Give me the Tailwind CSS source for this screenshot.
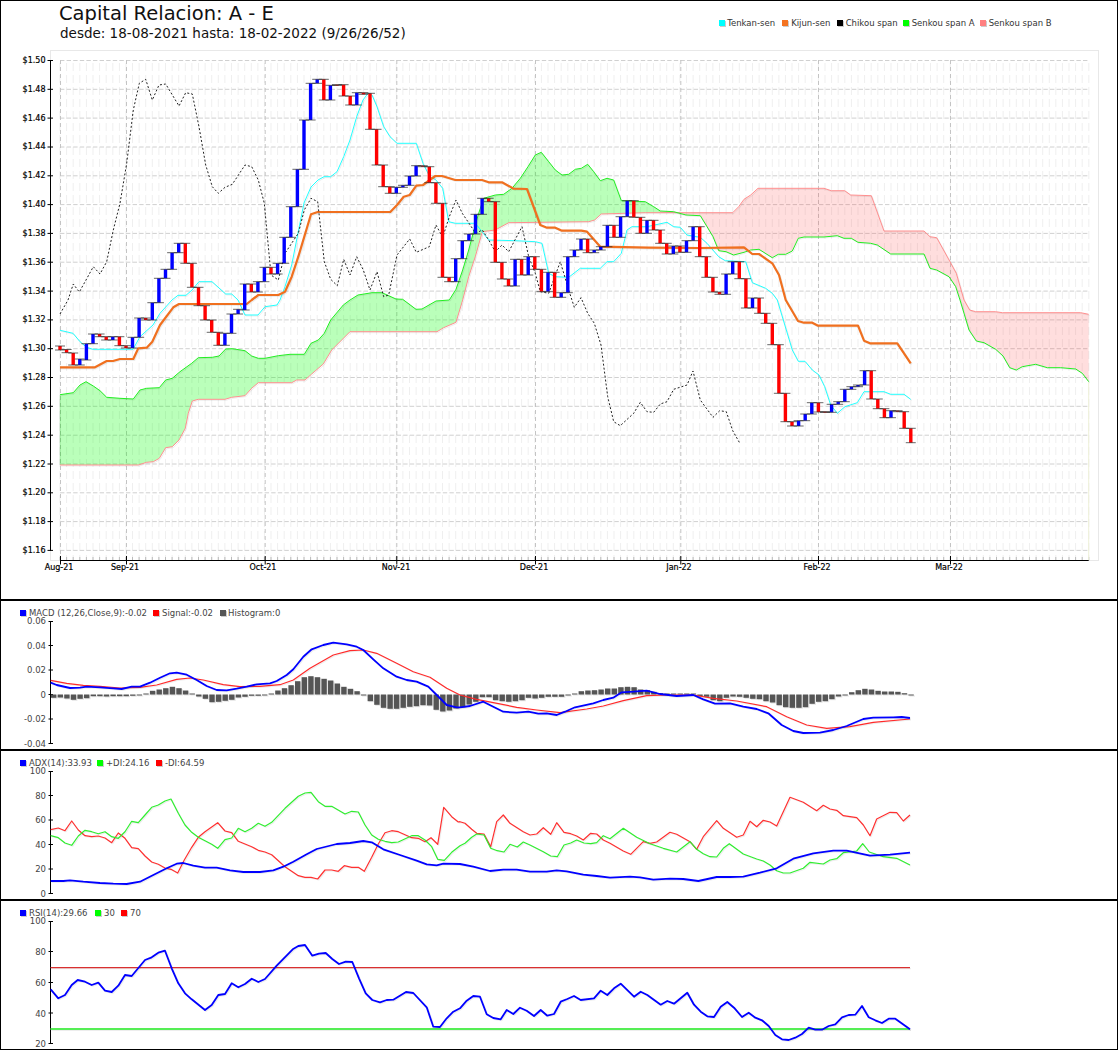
<!DOCTYPE html>
<html lang="es">
<head>
<meta charset="UTF-8" />
<title>Capital Relacion: A - E</title>
<script src="https://cdn.jsdelivr.net/npm/@tailwindcss/browser@4"></script>
</head>
<body class="bg-white font-['DejaVu_Sans',sans-serif] text-[#333]">
<div class="w-[1118px] h-[1050px] flex flex-col">

  <!-- grafico principal: ichimoku -->
  <section class="box-border h-[600px] border border-black flex flex-col">
    <header class="h-[49px] flex items-start">
      <div class="pl-[58px] pt-[1px] text-[#111]">
        <h1 class="text-[19.5px] leading-[24px]">Capital Relacion: A - E</h1>
        <p class="text-[13.5px] leading-[14px] pl-px whitespace-nowrap">desde: 18-08-2021 hasta: 18-02-2022 (9/26/26/52)</p>
      </div>
      <ul class="ml-[313px] mt-[16px] flex text-[8.5px] leading-[12px]">
        <li class="flex items-center w-[63.5px]"><span class="w-[6px] h-[6px] mr-[2.5px] bg-[#00ffff] shadow-[1px_1px_0_#ccc]"></span>Tenkan-sen</li>
        <li class="flex items-center w-[54.5px]"><span class="w-[6px] h-[6px] mr-[3px] bg-[#f47321] shadow-[1px_1px_0_#ccc]"></span>Kijun-sen</li>
        <li class="flex items-center w-[66px]"><span class="w-[6px] h-[6px] mr-[3px] bg-black shadow-[1px_1px_0_#ccc]"></span>Chikou span</li>
        <li class="flex items-center w-[77px]"><span class="w-[6px] h-[6px] mr-[3px] bg-[#00ff00] shadow-[1px_1px_0_#ccc]"></span>Senkou span A</li>
        <li class="flex items-center"><span class="w-[6px] h-[6px] mr-[3px] bg-[#ff8080] shadow-[1px_1px_0_#ccc]"></span>Senkou span B</li>
      </ul>
    </header>
    <svg id="main" width="1116" height="549" viewBox="1 50 1116 549">
      <defs>
        <clipPath id="cloud-a"><rect x="50" y="50" width="610" height="520" /></clipPath>
        <clipPath id="cloud-b"><rect x="660" y="50" width="440" height="520" /></clipPath>
      </defs>
      <rect x="50.5" y="50.5" width="1048" height="510" fill="none" stroke="#e8e8e8" />
      <g id="main-grid"></g>
      <g id="main-plot"></g>
      <g font-size="8" fill="#000" text-anchor="end" stroke="#000" stroke-width="0.2">
        <text x="45.5" y="63">$1.50</text>
        <text x="45.5" y="92">$1.48</text>
        <text x="45.5" y="121">$1.46</text>
        <text x="45.5" y="149">$1.44</text>
        <text x="45.5" y="178">$1.42</text>
        <text x="45.5" y="207">$1.40</text>
        <text x="45.5" y="236">$1.38</text>
        <text x="45.5" y="265">$1.36</text>
        <text x="45.5" y="294">$1.34</text>
        <text x="45.5" y="322">$1.32</text>
        <text x="45.5" y="351">$1.30</text>
        <text x="45.5" y="380">$1.28</text>
        <text x="45.5" y="409">$1.26</text>
        <text x="45.5" y="438">$1.24</text>
        <text x="45.5" y="467">$1.22</text>
        <text x="45.5" y="495">$1.20</text>
        <text x="45.5" y="524">$1.18</text>
        <text x="45.5" y="553">$1.16</text>
      </g>
      <g font-size="8" fill="#000" text-anchor="middle" stroke="#000" stroke-width="0.2">
        <text x="59" y="570">Aug-21</text>
        <text x="125" y="570">Sep-21</text>
        <text x="263" y="570">Oct-21</text>
        <text x="396" y="570">Nov-21</text>
        <text x="534" y="570">Dec-21</text>
        <text x="679" y="570">Jan-22</text>
        <text x="817" y="570">Feb-22</text>
        <text x="949" y="570">Mar-22</text>
      </g>
    </svg>
  </section>

  <!-- MACD -->
  <section class="box-border h-[150px] border border-black flex flex-col">
    <ul class="h-[18px] pl-[19px] pt-[6px] flex text-[8.5px] leading-[10px] text-[#444]">
      <li class="flex items-center w-[133px]"><span class="w-[6px] h-[6px] mr-[3px] bg-[#0000ff] shadow-[1px_1px_0_#ccc]"></span>MACD (12,26,Close,9):-0.02</li>
      <li class="flex items-center w-[67px]"><span class="w-[6px] h-[6px] mr-[3px] bg-[#ff0000] shadow-[1px_1px_0_#ccc]"></span>Signal:-0.02</li>
      <li class="flex items-center"><span class="w-[6px] h-[6px] mr-[2px] bg-[#555] shadow-[1px_1px_0_#ccc]"></span>Histogram:0</li>
    </ul>
    <svg id="macd" class="overflow-visible" width="1116" height="130" viewBox="1 619 1116 130">
      <g font-size="8.5" fill="#444" text-anchor="end">
        <text x="46" y="623.5">0.06</text>
        <text x="46" y="648.5">0.04</text>
        <text x="46" y="673">0.02</text>
        <text x="46" y="697.5">0</text>
        <text x="46" y="722">-0.02</text>
        <text x="46" y="746.5">-0.04</text>
      </g>
    </svg>
  </section>

  <!-- ADX -->
  <section class="box-border h-[150px] border border-black flex flex-col">
    <ul class="h-[18px] pl-[19px] pt-[6px] flex text-[8.5px] leading-[10px] text-[#444]">
      <li class="flex items-center w-[77px]"><span class="w-[6px] h-[6px] mr-[3px] bg-[#0000ff] shadow-[1px_1px_0_#ccc]"></span>ADX(14):33.93</li>
      <li class="flex items-center w-[59px]"><span class="w-[6px] h-[6px] mr-[3px] bg-[#00ff00] shadow-[1px_1px_0_#ccc]"></span>+DI:24.16</li>
      <li class="flex items-center"><span class="w-[6px] h-[6px] mr-[3px] bg-[#ff0000] shadow-[1px_1px_0_#ccc]"></span>-DI:64.59</li>
    </ul>
    <svg id="adx" class="overflow-visible" width="1116" height="130" viewBox="1 769 1116 130">
      <g font-size="8.5" fill="#444" text-anchor="end">
        <text x="46" y="773.5">100</text>
        <text x="46" y="798.5">80</text>
        <text x="46" y="823">60</text>
        <text x="46" y="847.5">40</text>
        <text x="46" y="872">20</text>
        <text x="46" y="896.5">0</text>
      </g>
    </svg>
  </section>

  <!-- RSI -->
  <section class="box-border h-[150px] border border-black flex flex-col">
    <ul class="h-[18px] pl-[19px] pt-[6px] flex text-[8.5px] leading-[10px] text-[#444]">
      <li class="flex items-center w-[75px]"><span class="w-[6px] h-[6px] mr-[3px] bg-[#0000ff] shadow-[1px_1px_0_#ccc]"></span>RSI(14):29.66</li>
      <li class="flex items-center w-[26px]"><span class="w-[6px] h-[6px] mr-[3px] bg-[#00ff00] shadow-[1px_1px_0_#ccc]"></span>30</li>
      <li class="flex items-center"><span class="w-[6px] h-[6px] mr-[3px] bg-[#ff0000] shadow-[1px_1px_0_#ccc]"></span>70</li>
    </ul>
    <svg id="rsi" class="overflow-visible" width="1116" height="130" viewBox="1 919 1116 130">
      <g font-size="8.5" fill="#444" text-anchor="end">
        <text x="46" y="923.5">100</text>
        <text x="46" y="955">80</text>
        <text x="46" y="985.5">60</text>
        <text x="46" y="1016.5">40</text>
        <text x="46" y="1046.5">20</text>
      </g>
    </svg>
  </section>
</div>

<script>
// separacion entre barras y posicion de cada indice
var STEP = 6.595;
function xAt(i) { return 60 + i * STEP; }

// puntos leidos a escala 3x: x0 + z/3, y0 + z/3
function scaled(pts, x0, y0) {
  var out = [];
  for (var i = 0; i < pts.length; i += 2) out.push(x0 + pts[i] / 3, y0 + pts[i + 1] / 3);
  return out;
}
function join(a, b, bx, y0) { return scaled(a, 0, y0).concat(scaled(b, bx, y0)); }

function pointsAttr(p) {
  var s = [];
  for (var i = 0; i < p.length; i += 2) s.push(p[i].toFixed(1) + ',' + p[i + 1].toFixed(1));
  return s.join(' ');
}
function line(p, color, w, dash) {
  var a = 'points="' + pointsAttr(p) + '" fill="none" stroke-linejoin="round" stroke-width="' + w + '"' +
    (dash ? ' stroke-dasharray="' + dash + '"' : '');
  var shadow = dash ? '' : '<polyline ' + a + ' stroke="rgba(0,0,0,0.07)" transform="translate(1,1)" />';
  return shadow + '<polyline ' + a + ' stroke="' + color + '" />';
}
function seg(x1, y1, x2, y2, color, dash, w) {
  return '<line x1="' + x1 + '" y1="' + y1 + '" x2="' + x2 + '" y2="' + y2 + '" stroke="' + color + '" stroke-width="' + (w || 1) + '"' +
    (dash ? ' stroke-dasharray="' + dash + '"' : '') + ' />';
}
function rect(x, y, w, h, color) {
  return '<rect x="' + x.toFixed(1) + '" y="' + y.toFixed(1) + '" width="' + w + '" height="' + h.toFixed(1) + '" fill="' + color + '" />';
}

/* ---------- ichimoku ---------- */
var tenkan = [60,330.3,73,333.3,80,341.7,86.7,347.3,93,349.3,133,349.3,140,336.7,153,325,160,313.3,172,300,178,295.3,186,295.3,192,290,199,281.7,212,281.7,225.7,294,231.7,294,238,300,245,315,258,315,265,306.7,277,305,280,300,285,286.7,291.7,265,298,233,304,203,311,187,318,180,324,176.7,330.7,176.7,337,171.7,343.7,156.7,350,140,356.7,116.7,363,100,368,93.3,372,95,377,106.7,383.7,126.7,390,136.7,397,143.3,416.3,143.3,423,163.3,429.7,176.7,435.3,179.3,442.7,188.3,448.7,221.7,455.3,223.3,475.3,223.3,482,231.7,488.7,240,515.3,240.7,535.3,241.7,542,243.3,548.7,273.3,555.3,276.7,568.7,277.3,580.3,268.3,600.3,268.3,607,261.7,613.7,261.7,621.3,253.3,627,230,632,226.7,647,226.7,667,222.3,673.7,226.7,680.3,227.3,687,235,700.3,237.3,707,243.3,718.7,256.7,725.3,260.7,745.7,261.7,752.3,282.7,765.7,288.3,772.3,293.3,777.3,300,792.3,350,798.3,361.3,805,361.3,812.3,370,819,375,824.7,386.7,830.7,405,837.3,413.3,845,406.7,857.3,402.7,864,391.7,884,391.7,890.7,394.3,904,394.3,910.7,399.3];
var kijun = [60,367.3,95,367.3,106.7,361,113,361,120,359,133.3,359,138.3,348.3,146.7,347.7,152.3,341.7,160,325,173.3,307.3,179,304,246.7,304,251.7,300,258.3,295,278.3,295,285,291.7,291.7,276.7,298.3,256.7,311,214.3,317.7,212,390.3,212,397,205,403.7,196.7,409.7,195,416.3,185.7,423,185,429.7,180,435.3,176,442,176,455.3,180,482,180,488.7,182.3,502,182.3,513.7,188.7,527,189,540.3,225,547,227.7,555.3,227.7,562,230.7,581.3,230.7,587,231.7,600.3,246.7,648.7,247.7,700,248,744,247.3,752.3,254,759,254,772.3,263.3,779,275,785.7,300,798,321,804,322.7,812.3,322.7,818,325.7,858,325.7,864,340.7,870,343.3,897.3,343.3,910.7,363.3];
var chikou = [60,314,68,300,73.3,284,79.3,292,86,280,93.3,266.7,100,274,106.7,261.7,113.3,230,120,203.3,126.7,163.3,133.3,110,139.3,83.3,145.7,79.3,152.3,100,159,85,165.7,84,179,106,185.7,92.7,192.3,94,199,126.7,205.7,165,212.3,186.7,218.3,193.3,225,187.3,232.3,184.3,245,165,251.7,166.7,258.3,180,264.3,203.3,271,275,278.3,280,285,253.3,298.3,233.3,304.3,210,311,198.3,317.7,201.7,324.3,261.7,330.7,279.3,337.3,285.7,343.7,259.3,350,275,356.7,256.7,363.3,270,370,290,377,271.7,383.7,296.7,388.7,295,397,255,409.7,239,416.3,252.3,429.3,246.7,436,225,442.7,237.3,449.3,216.7,456,200,462.3,213.3,475.7,233.3,482.3,230,488.7,240,495.3,251.7,502,245,508.7,251.7,522,226.7,528.7,256.7,535.3,273.3,540.3,291.7,548.7,293.3,560.3,261.7,568.7,290,574.3,307.3,581,297.7,587.7,313.3,594.3,323.3,601,345,607.7,396.7,613.7,421.7,620.3,425.7,633.7,413.3,640.3,402.3,647,411.7,653.7,412.3,660.3,404,667,401.7,673.7,389.3,687,385,693,371,700.3,400,713,417.3,719.7,410.7,726.3,411.7,732.7,430.7,739.3,442.3];
var spanA = [60,394.7,73.3,392.7,80,385,86,381.7,93.3,386,100,390.7,106.7,397.3,120,398.3,133.3,399,140,390,146.7,388.3,159.3,387.7,165.7,380,172.3,378.3,180,371.7,191.7,363.3,198.3,357.7,212.3,357.3,219,356,225.7,349,232.3,348.7,245,350.7,251.7,356,258.3,358.3,265,358.3,278.3,355.7,290,354.3,304.3,354.3,311,343.3,318.3,340,324.3,333.3,330.7,320,343.3,305,350,300,358,295,372,292.7,382,292.7,396,299,402.7,299.3,416,309.3,422,309,436,301,449.3,300,456,289.3,462.7,270,468.7,250,475.3,225,478.7,213.3,483.7,198.3,495.3,195,503.7,194.3,512,188.3,520.3,178.3,528,166.7,535.3,155,541.3,152.3,548.7,161.7,555.3,170,562,175,568.7,174.3,575.3,169.3,581.3,168.3,587.7,164.3,593.7,171.7,600.3,180.7,607,178.3,613.7,180,621.3,200.7,645.3,201.7,653.7,206.7,660.3,211,673.7,211.7,686,215,700.3,215.7,707,226.7,713,236.7,718.7,250.7,726,251.7,733.7,255,744,252.3,750.7,250,759,249.3,772.3,257.7,778.3,254.3,785.7,254.3,792.3,251,798.3,238.3,804,237,824,237,837.3,235.7,844,238.3,851.3,238.3,858,242.3,870.7,243.3,877.3,245,890.7,254,924,254,930,268.3,936.7,270,949,276.7,955.7,286.7,960,300,969,330,976.3,341,984,342.7,995.7,349.3,1003,356,1009.7,367.7,1016.3,370,1022.3,366.7,1035.7,364.3,1047.3,367.7,1060.7,367.7,1075.7,369,1082.3,373.3,1088.7,381.7];
var spanB = [60,465,138.3,465,146.7,462.3,153.3,461.7,159.3,458.3,165.7,447.7,172.3,446.7,179,440,185.3,428.3,188.3,413.3,192.3,401,198.3,399.3,225,399.3,231.7,397.3,245,395.7,251.7,388.3,258.3,382.7,291.7,382.7,296.7,380,305,380,311.7,374,323.3,364,331.7,350,350,331.7,437,331.7,443.7,327.7,456,322.3,462.7,300,468.7,276.7,475.3,256.7,482.3,231.7,495.3,230,508.7,222.7,588.7,221.7,594.7,220,601.3,214,645.3,212.7,732.7,212.7,738.7,206.7,744,199.3,750.7,195,758,188.3,824,188.3,831.3,190.7,844.7,190.7,850.7,195,871.3,195.7,884,231,924,231,930,236.7,936.7,237.7,950,261.7,956.3,273.3,964,300,969.7,310,975.7,311.7,995.7,311.7,1002.3,312.7,1080.7,312.7,1088.7,314.3];

// [arriba, abajo, 'b'|'r']: barra de apertura/cierre
var bars = [[346,350,'r'],[349.5,352.7,'r'],[353,365,'r'],[359,365,'b'],[343.7,360,'b'],[334,343.7,'b'],[334,336.7,'r'],[336.7,340,'r'],[336.7,340,'b'],[336.7,345.7,'r'],[345.7,348,'r'],[337.3,348,'b'],[318,337.3,'b'],[318,320,'r'],[302.7,320,'b'],[278.3,302.7,'b'],[269.3,278.3,'b'],[252.7,269.3,'b'],[243.3,252.7,'b'],[243.3,263.3,'r'],[263.3,287.3,'r'],[287.3,305.7,'r'],[305.7,320,'r'],[320,332.3,'r'],[332.3,345.3,'r'],[333.3,345.3,'b'],[314,333.3,'b'],[309.3,314,'b'],[284,310,'b'],[284,292,'r'],[281.7,292,'b'],[267.3,281.7,'b'],[267.3,274,'r'],[263.3,274,'b'],[237.3,263.3,'b'],[206.7,237.3,'b'],[169.3,206.7,'b'],[120,169.3,'b'],[83.3,120,'b'],[79.3,83.3,'b'],[79.3,100,'r'],[85.3,100,'b'],[84.7,85.3,'r'],[84.7,96,'r'],[96,105,'r'],[92.7,105,'b'],[92.7,94.3,'r'],[93.3,129.3,'r'],[129.3,165,'r'],[165,186.7,'r'],[186.7,193.3,'r'],[187.3,193.3,'b'],[185.3,187.3,'b'],[176,185.3,'b'],[165.7,176,'b'],[165.7,166.7,'r'],[166.7,182.7,'r'],[182.7,203.3,'r'],[203.3,277.3,'r'],[277.3,281.7,'r'],[258.7,281.7,'b'],[240.7,258.7,'b'],[234,240.7,'b'],[214.3,234,'b'],[198.3,214.3,'b'],[198.3,201.7,'r'],[201.7,262.3,'r'],[262.3,279,'r'],[279,286,'r'],[259.3,286,'b'],[259.3,275,'r'],[256.7,275,'b'],[256.7,269.3,'r'],[269.3,291.7,'r'],[272.3,291.7,'b'],[272.3,297.3,'r'],[292.7,297.3,'b'],[256.7,292.7,'b'],[250,256.7,'b'],[239,250,'b'],[239,252.7,'r'],[250,252.7,'b'],[246.7,250,'b'],[225.3,246.7,'b'],[225.3,237.3,'r'],[216.7,237.3,'b'],[200.7,216.7,'b'],[200.7,217.3,'r'],[217.3,233.3,'r'],[220.3,233.3,'b'],[220.3,230,'r'],[230,243.3,'r'],[243.3,254,'r'],[246,254,'b'],[246,252.3,'r'],[240.7,252.3,'b'],[226.7,240.7,'b'],[226.7,256.7,'r'],[256.7,277.3,'r'],[277.3,292,'r'],[292,294.3,'r'],[274,294.3,'b'],[261.7,274,'b'],[261.7,278.7,'r'],[278.7,308,'r'],[298,308,'b'],[298,313.3,'r'],[313.3,323.3,'r'],[323.3,344.7,'r'],[344.7,393.3,'r'],[393.3,421.7,'r'],[421.7,426,'r'],[420.7,426,'b'],[414,420.7,'b'],[402.7,414,'b'],[402.7,412,'r'],[411.7,412.3,'r'],[404.3,412.3,'b'],[401.7,404.3,'b'],[389.3,401.7,'b'],[386.7,389.3,'b'],[385,386.7,'b'],[370.7,385,'b'],[370.7,399,'r'],[399,408.7,'r'],[408.7,417.7,'r'],[410.7,417.7,'b'],[410.7,411.7,'r'],[411.7,428.3,'r'],[428.3,442.7,'r']];

var grid = '';
for (var i = 0; i <= 156; i++) {
  var x = xAt(i).toFixed(1);
  grid += seg(x, 63, x, 560, '#efefef', '8 4');
  grid += seg(x, 557, x, 560.5, '#bbb');
}
for (var k = 0; k <= 17; k++) {
  var y = (60.5 + k * 28.82).toFixed(1);
  grid += seg(60, y, 1088.7, y, '#d0d0d0', '4.4 2.2');
  grid += seg(47.5, y, 53, y, '#000');
}
[60, 126, 264.7, 396.3, 535, 680.3, 818, 950].forEach(function (m) {
  var mx = m + 0.5;
  grid += seg(mx, 60, mx, 558, '#c4c4c4', '4 3');
  grid += seg(mx, 556, mx, 564.5, '#000');
});
grid += seg(50.5, 60, 50.5, 551, '#000');
grid += seg(60, 560.5, 1088.7, 560.5, '#000');
document.getElementById('main-grid').innerHTML = grid;

var cloud = pointsAttr(spanA) + ' ';
for (var j = spanB.length - 2; j >= 0; j -= 2) cloud += spanB[j].toFixed(1) + ',' + spanB[j + 1].toFixed(1) + ' ';
var plot = '<polygon points="' + cloud + '" fill="rgba(0,255,0,0.27)" clip-path="url(#cloud-a)" />';
plot += '<polygon points="' + cloud + '" fill="rgba(255,60,60,0.17)" clip-path="url(#cloud-b)" />';
plot += seg(1088.7, 382, 1088.7, 560, '#eef0d8');
plot += seg(60, 395, 60, 465, 'rgba(0,120,0,0.2)');
plot += line(spanB, '#ff8f8f', 1) + line(spanA, '#22ee22', 1);
plot += line(tenkan, '#22ffff', 1);
plot += line(kijun, '#f0701f', 2.2);
plot += line(chikou, '#222', 1, '2 2');
bars.forEach(function (b, i) {
  var bx = xAt(i);
  plot += rect(bx - 1.7, b[0], 3.4, Math.max(b[1] - b[0], 1), b[2] == 'b' ? '#0000ff' : '#ff0000');
  plot += seg(bx - 5, b[0], bx + 5, b[0], 'rgba(40,40,40,0.7)');
  plot += seg(bx - 5, b[1], bx + 5, b[1], 'rgba(40,40,40,0.7)');
});
document.getElementById('main-plot').innerHTML = plot;

/* ---------- eje de los paneles inferiores ---------- */
function axis(ticks) {
  var s = seg(50.5, ticks[0], 50.5, ticks[ticks.length - 1], '#000');
  ticks.forEach(function (t) { s += seg(48.5, t, 53, t, '#000'); });
  return s;
}
function append(id, html) { document.getElementById(id).insertAdjacentHTML('beforeend', html); }

/* ---------- MACD ---------- */
var hist1 = [-10,-9,-12,-16,-13,-11,-5,-5,-6,-5,-5,-5,-4,-2,3,11,15,19,23,19,12,2,-6,-13,-23,-22,-19,-16,-9,-7,-4,-4,-2,3,12,19,28,40,52,55,52,47,42,33,23,17,10,-3,-20,-31,-40,-43,-43,-40,-37,-35,-32,-33,-46,-51,-48,-42];
var hist2 = [-38,-30,-22,-8,-8,-17,-20,-22,-20,-17,-10,-12,-10,-7,-7,-7,-2,3,10,12,13,15,18,18,22,23,22,15,13,8,4,3,1,2,2,2,-5,-7,-17,-20,-10,-6,-7,-10,-13,-14,-20,-24,-32,-38,-40,-40,-38,-28,-22,-20,-14,-6,-1,7,13,17,15,11,9,9,8,4,-1];
var macdBlue = join([152,248,170,255,210,264,240,263,260,260,300,262,340,265,365,267,395,260,420,260,450,248,480,233,510,220,530,218,560,224,590,240,620,258,650,270,680,271,710,266,740,260,770,253,810,250,830,243,860,225,880,208,910,170,935,148,970,135,1000,128,1040,133,1070,140,1090,150,1120,178,1150,205,1190,230,1220,240,1250,245,1285,260,1310,285,1340,315,1370,322],
  [0,322,30,318,70,305,100,320,130,335,170,338,205,335,235,341,260,340,290,345,315,335,345,322,400,310,430,300,460,293,485,277,520,275,560,272,600,282,650,288,700,285,730,298,765,311,810,310,850,320,890,327,925,340,965,375,1000,393,1030,399,1080,398,1120,390,1160,378,1210,357,1240,353,1300,352,1325,351,1350,354], 460, 600);
var macdRed = join([152,241,200,250,250,256,300,259,360,264,420,262,470,255,530,238,570,234,610,240,670,254,720,260,780,259,840,254,880,240,930,205,1000,165,1050,152,1090,150,1130,160,1190,190,1240,215,1290,232,1340,265,1380,285],
  [50,298,100,308,170,322,230,330,300,338,380,327,430,318,490,302,560,287,620,285,700,285,760,295,830,303,920,320,980,350,1040,375,1100,385,1170,380,1240,367,1350,357], 460, 600);
var m = axis([621.5, 645.5, 670, 694.5, 719, 743.5]);
hist1.concat(hist2).forEach(function (h, i) {
  var hx = xAt(i - 1), hv = h / 3;
  if (Math.abs(hv) < 1) hv = hv < 0 ? -1 : 1;
  var top = hv > 0 ? 694.5 - hv : 694.5;
  m += rect(hx - 1.4, top + 1, 5.6, Math.abs(hv), '#e4e4e4');
  m += rect(hx - 2.4, top, 5.4, Math.abs(hv), '#555');
});
m += line(macdRed, '#ff2a2a', 1.2) + line(macdBlue, '#0000ff', 1.8);
append('macd', m);

/* ---------- ADX ---------- */
var adxBlue = join([152,393,190,393,210,391,250,395,300,399,340,401,380,402,420,395,460,375,500,355,530,341,550,339,580,347,615,353,650,353,690,361,730,366,780,366,820,361,850,350,880,335,920,313,950,297,1010,282,1050,279,1090,273,1115,277,1150,298,1200,315,1250,332,1280,343,1310,346,1330,341,1380,342],
  [40,350,90,363,130,359,170,359,210,365,260,365,290,361,320,364,370,374,410,378,450,383,510,380,540,382,580,389,630,386,670,387,715,393,770,381,810,381,850,380,900,368,950,355,1000,326,1060,310,1120,302,1160,302,1230,317,1290,314,1350,308], 460, 750);
var adxGreen = join([152,257,175,263,195,279,215,286,235,258,255,241,275,245,295,251,315,245,335,260,355,265,375,245,395,214,415,218,435,195,455,172,475,165,495,153,513,147,535,190,555,225,575,247,595,262,615,272,635,283,653,295,675,269,695,264,715,235,735,245,755,235,775,220,795,229,815,217,855,175,895,139,915,129,933,127,955,155,975,169,995,169,1035,192,1055,184,1075,186,1095,225,1115,255,1135,268,1155,274,1175,278,1195,276,1235,257,1255,257,1275,270,1295,290,1313,328,1333,331,1355,307,1380,287],
  [15,280,35,262,50,252,72,255,92,295,112,302,132,306,150,283,172,291,190,276,210,285,250,305,272,318,292,320,312,285,332,279,350,270,372,279,392,281,410,278,430,257,450,266,490,235,530,262,570,281,610,295,650,306,690,275,710,298,730,311,750,320,770,321,790,295,808,281,850,312,890,327,910,333,930,345,950,362,970,369,990,369,1030,355,1050,337,1090,342,1110,330,1130,326,1150,308,1190,303,1208,281,1228,306,1270,320,1310,325,1350,345], 460, 750);
var adxRed = join([152,239,175,234,195,242,215,213,235,240,255,257,275,260,295,258,315,264,335,278,355,249,375,265,395,293,415,296,435,318,455,336,475,343,495,354,513,358,533,369,553,330,575,292,595,262,615,245,635,231,653,218,675,243,695,248,715,274,735,282,755,290,775,301,795,306,815,314,855,350,895,377,915,382,933,382,953,387,975,360,995,360,1015,364,1033,347,1055,352,1075,352,1093,364,1115,322,1135,282,1155,248,1175,242,1195,245,1235,263,1255,265,1275,275,1293,263,1313,283,1331,172,1355,200,1375,216],
  [0,215,15,220,35,238,50,250,72,252,92,290,110,215,130,195,150,220,190,245,210,255,230,252,250,233,272,253,290,218,312,247,332,251,350,258,370,270,392,250,410,252,430,270,450,280,490,303,512,313,550,275,570,280,590,276,630,247,650,253,690,275,710,298,730,260,770,212,790,235,830,262,850,255,870,214,890,230,910,211,930,216,950,228,990,142,1030,157,1070,182,1090,166,1110,177,1130,181,1150,197,1190,203,1210,225,1230,257,1250,207,1290,187,1310,188,1330,213,1350,195], 460, 750);
append('adx', axis([771.5, 795.5, 820, 844.5, 869, 893.5]) + line(adxRed, '#ff3030', 1.2) + line(adxGreen, '#30ee30', 1.2) + line(adxBlue, '#0000ff', 1.8));

/* ---------- RSI ---------- */
var rsiBlue = join([152,268,175,295,195,285,215,255,233,240,255,245,275,255,295,248,315,272,335,276,355,257,375,225,395,228,435,180,455,172,475,158,495,152,515,205,535,250,555,280,575,298,615,330,635,315,655,285,675,282,695,250,715,262,735,252,755,236,775,246,795,237,830,197,878,148,895,138,915,135,937,167,957,161,977,159,997,177,1017,192,1037,185,1057,186,1077,235,1097,280,1117,300,1140,307,1160,300,1180,299,1218,276,1240,279,1280,322,1300,380,1320,381,1340,355,1360,335,1380,325],
  [20,302,40,288,60,290,80,343,100,354,122,358,140,330,160,342,180,323,200,332,222,348,242,330,262,347,282,342,302,305,322,297,342,288,362,300,402,295,422,272,442,285,462,265,482,251,522,290,542,275,562,285,602,314,622,303,642,311,682,278,702,314,722,335,742,349,762,351,782,320,802,306,822,323,846,351,866,338,886,353,906,361,926,378,946,405,966,418,986,420,1006,413,1026,402,1046,383,1066,389,1086,389,1106,378,1126,373,1146,352,1166,345,1186,344,1206,318,1226,352,1246,361,1266,369,1286,356,1306,356,1350,388], 460, 900);
append('rsi', axis([921.5, 951.5, 982.5, 1013, 1043.5]) +
  line([50.5, 967.7, 910, 967.7], '#d93030', 1.2) +
  line([50.5, 1029, 910, 1029], '#55ee55', 1.8) +
  line(rsiBlue, '#0000ff', 1.8));
</script>
</body>
</html>
